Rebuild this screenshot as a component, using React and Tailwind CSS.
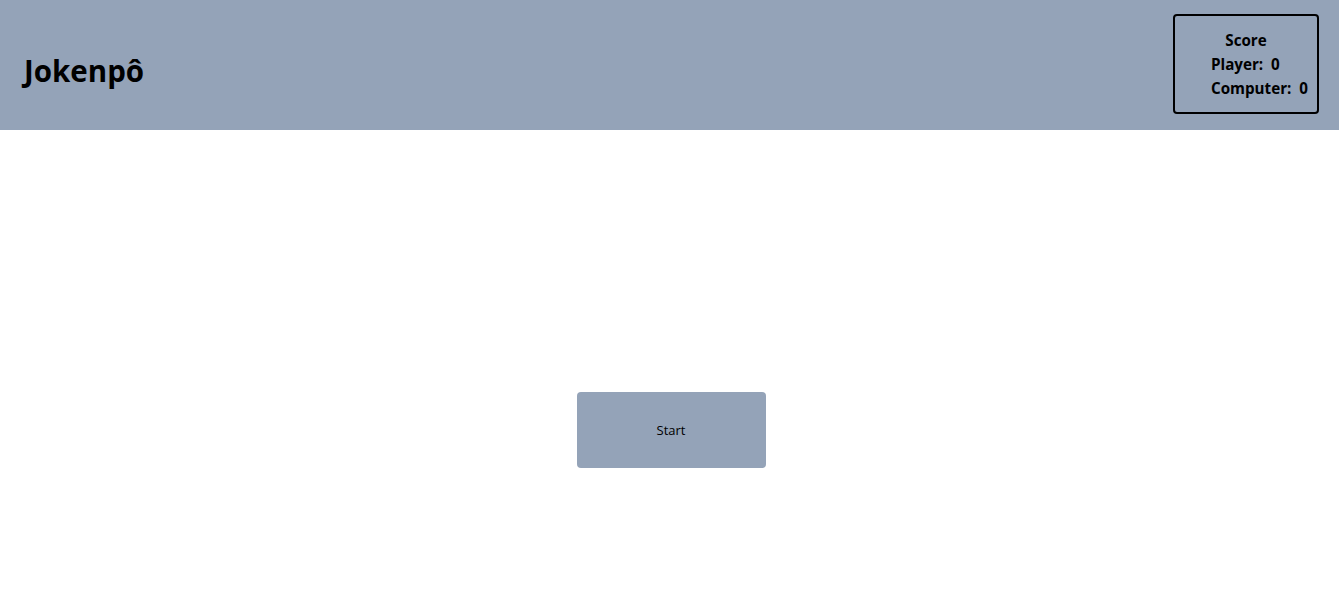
export default function App() {
  return (
    <div className="min-h-screen bg-white font-['Open_Sans',sans-serif] text-black">
      <header className="flex h-[130px] items-start justify-between bg-[#94a3b8] pl-6 pr-5">
        <h1 className="mt-[51px] text-[29.5px] leading-10 font-bold">Jokenpô</h1>
        <div className="mt-[14px] w-[146px] rounded border-2 border-black pt-3 pb-3 text-[15.2px] font-bold leading-6">
          <p className="text-center">Score</p>
          <p className="pl-9">Player:&nbsp; 0</p>
          <p className="pl-9">Computer:&nbsp; 0</p>
        </div>
      </header>
      <main className="flex justify-center pt-[262px] pl-[3px]">
        <button className="h-[76px] w-[189px] rounded bg-[#94a3b8] pt-[2px] text-[13px]">Start</button>
      </main>
    </div>
  );
}
